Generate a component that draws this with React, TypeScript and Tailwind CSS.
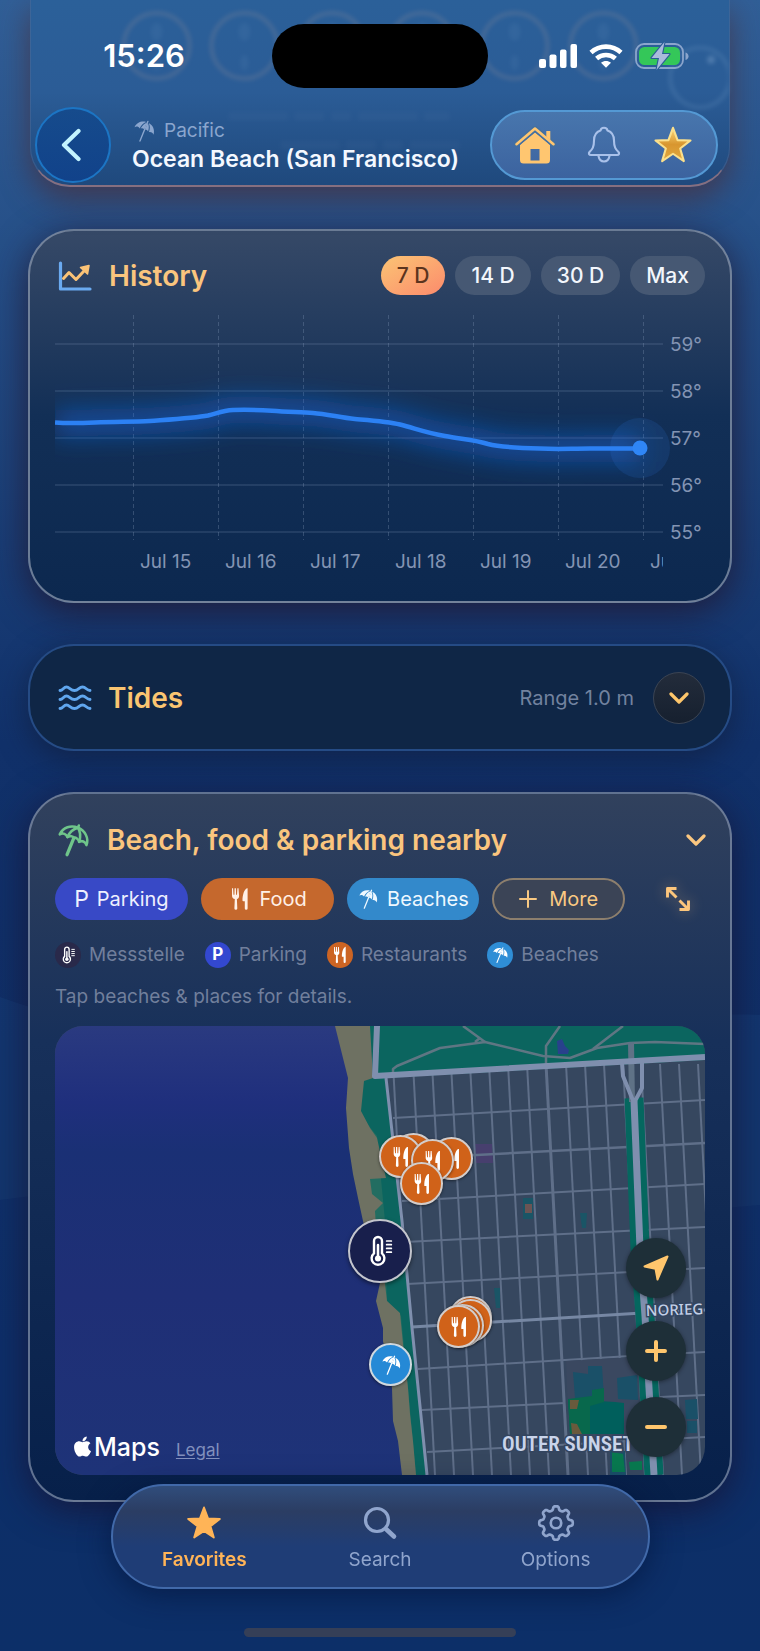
import type { ReactNode } from "react";
import { FaApple } from "react-icons/fa";

type IconProps = { className?: string };

const starPath =
  "M12 2.2 14.6 9.2 22 9.4 16.1 14 18.2 21.2 12 17 5.8 21.2 7.9 14 2 9.4 9.4 9.2Z";

const gearPath = (() => {
  const points: string[] = [];
  for (let i = 0; i < 160; i++) {
    const a = (i / 160) * Math.PI * 2;
    const wave = Math.tanh(2.2 * Math.cos(a * 8));
    const r = 9.4 + 1.2 * wave;
    points.push(`${(12 + r * Math.sin(a)).toFixed(2)} ${(12 - r * Math.cos(a)).toFixed(2)}`);
  }
  return `M${points.join("L")}Z`;
})();

function Umbrella({ className }: IconProps) {
  return (
    <svg viewBox="0 0 24 24" className={className} fill="currentColor" aria-hidden="true">
      <g transform="rotate(22 12 12)">
        <path d="M1.8 12C2 7 6 3.2 10.6 2.9 8.2 5 7.2 7.8 7 11.2 5.4 10 3.2 10.2 1.8 12Z" />
        <path d="M22.2 12C22 7 18 3.2 13.4 2.9 15.8 5 16.8 7.8 17 11.2 18.6 10 20.8 10.2 22.2 12Z" />
        <path d="M8 11C8.3 7.4 9.4 4.8 11.5 3.2V10.2C10.2 9.8 9 10 8 11Z" />
        <path d="M16 11C15.7 7.4 14.6 4.8 12.5 3.2V10.2C13.8 9.8 15 10 16 11Z" />
        <rect x="11.3" y="1" width="1.4" height="22.5" rx=".7" />
      </g>
    </svg>
  );
}

function UmbrellaOutline({ className }: IconProps) {
  return (
    <svg
      viewBox="0 0 24 24"
      className={className}
      fill="none"
      stroke="currentColor"
      strokeWidth="1.7"
      strokeLinecap="round"
      strokeLinejoin="round"
      aria-hidden="true"
    >
      <g transform="rotate(22 12 12)">
        <path d="M2.4 11.8C2.6 6.6 7 3.2 12 3.2S21.4 6.6 21.6 11.8C20 9.9 17.6 9.9 16.2 11.6 15 9.9 13 9.6 12 10.4 11 9.6 9 9.9 7.8 11.6 6.4 9.9 4 9.9 2.4 11.8Z" />
        <path d="M7.8 11.4C8 7.6 9.8 4.8 12 3.2 14.2 4.8 16 7.6 16.2 11.4M12 1.6V3" />
        <path d="M12 10.6V22.6" strokeWidth="2.2" />
      </g>
    </svg>
  );
}

function ForkKnife({ className }: IconProps) {
  return (
    <svg viewBox="0 0 24 24" className={className} fill="currentColor" aria-hidden="true">
      <path d="M4 1.2h1.1l.4 6.6h.9l.2-6.6h1.3l.2 6.6h.9l.4-6.6h1.1l.6 7.5c0 1.8-.8 2.9-2.2 3.4l.4 9.3a1.4 1.4 0 0 1-2.9 0l.4-9.3C5.200 11.600 4 10.500 4 8.700Z" />
      <path d="M19.600 1.200V21.400a1.400 1.400 0 0 1-2.800 0V14.300h-1.500c-.6 0-.8-.3-.8-.8 0-5.400 1.600-11 4.400-12.300.4-.1.700-.1.700 0Z" />
    </svg>
  );
}

function Thermometer({ className }: IconProps) {
  return (
    <svg
      viewBox="0 0 24 24"
      className={className}
      fill="none"
      stroke="currentColor"
      strokeLinecap="round"
      aria-hidden="true"
    >
      <path d="M7.500 13.800V4.500a3 3 0 0 1 6 0v9.300a4.800 4.800 0 1 1-6 0Z" strokeWidth="1.800" />
      <path d="M10.500 7.500V17" strokeWidth="1.900" />
      <circle cx="10.500" cy="17.600" r="2.300" fill="currentColor" stroke="none" />
      <path d="M17 4.500h3.500M17 7.300h3.500M17 10.100h3.500M17 12.900h3.500" strokeWidth="1.300" />
    </svg>
  );
}

function Chevron({ className }: IconProps) {
  return (
    <svg viewBox="0 0 20 12" className={className} fill="none" stroke="currentColor" strokeWidth="3.200" strokeLinecap="round" strokeLinejoin="round" aria-hidden="true">
      <path d="M2 2 10 10 18 2" />
    </svg>
  );
}

function Star({ className }: IconProps) {
  return (
    <svg viewBox="0 0 24 24" className={className} fill="currentColor" stroke="currentColor" strokeWidth="1.200" strokeLinejoin="round" aria-hidden="true">
      <path d={starPath} />
    </svg>
  );
}

function StatusBar() {
  return (
    <div className="grid h-[64px] grid-cols-[1fr_216px_1fr] items-center">
      <time className="pl-4 text-center text-[31px] leading-9 font-semibold text-white">15:26</time>
      <div className="h-full rounded-full bg-black" />
      <div className="flex items-center gap-3 pl-[51px]">
        <svg viewBox="0 0 38 24" className="h-6 w-[38px]" fill="#fff" aria-label="Signal">
          <rect x="0" y="15" width="7" height="9" rx="2" />
          <rect x="10.500" y="10.500" width="7" height="13.500" rx="2" />
          <rect x="21" y="5.500" width="6.500" height="18.500" rx="2" />
          <rect x="31.500" y="0" width="6.500" height="24" rx="2" />
        </svg>
        <svg viewBox="0 0 34 24" className="h-6 w-[34px]" fill="none" stroke="#fff" strokeWidth="4.600" aria-label="Wi-Fi">
          <path d="M2 8.500C10.500 .6 23.500 .6 32 8.500" />
          <path d="M7.600 14.500C13 9.800 21 9.800 26.400 14.500" />
          <path d="M17 23.800 12 18.800C15 16.400 19 16.400 22 18.800Z" fill="#fff" stroke="none" />
        </svg>
        <svg viewBox="0 0 54 28" className="h-7 w-[54px]" aria-label="Charging">
          <rect x="1" y="2" width="47" height="24" rx="8" fill="none" stroke="#8ba5cc" strokeWidth="1.800" />
          <rect x="4" y="5" width="41" height="18" rx="5.500" fill="#34c759" />
          <path d="M50.500 10.500c4 1 4 6.500 0 7.500Z" fill="#8ba5cc" />
          <path d="M29.500 0 16.500 16H24L21.500 28 34.500 12H27Z" fill="#a9bbdc" stroke="#2a5c97" strokeWidth="2.200" strokeLinejoin="round" paintOrder="stroke" />
        </svg>
      </div>
    </div>
  );
}

function HeaderGhosts() {
  return (
    <svg
      viewBox="0 0 700 186"
      preserveAspectRatio="none"
      className="pointer-events-none absolute inset-0 h-full w-full opacity-35 blur-[2px]"
      fill="none"
      stroke="#7b8298"
      strokeWidth="4"
      aria-hidden="true"
    >
      {[126, 214, 302, 392, 485, 574].map((x) => (
        <g key={x}>
          <circle cx={x} cy="46" r="33" />
          <ellipse cx={x} cy="32" rx="6" ry="9" fill="#5a86b5" stroke="none" opacity=".5" />
          <ellipse cx={x} cy="63" rx="4" ry="8" fill="#5a86b5" stroke="none" opacity=".5" />
        </g>
      ))}
      <circle cx="671" cy="78" r="30" stroke="#5a86b5" />
      <circle cx="682" cy="60" r="4" fill="#8fb0d4" stroke="none" />
      <path d="M198 117H420M250 146H430" stroke="#5578a5" strokeWidth="9" strokeDasharray="60 6 30 7 20 7" opacity=".3" />
    </svg>
  );
}

function Header() {
  return (
    <header className="relative mx-[30px] h-[187px] rounded-b-[40px] border-x border-b-2 border-x-[#5b6f95]/40 border-b-[#866f80] bg-gradient-to-b from-[#2b6099] via-[#2b5c96] to-[#1f497d] pt-6 shadow-[0_12px_30px_rgba(72,48,62,0.75)]">
      <HeaderGhosts />
      <div className="relative -mx-[31px]">
        <StatusBar />
        <div className="mt-[19px] flex items-center pr-[42px] pl-[35px]">
          <button
            type="button"
            aria-label="Back"
            className="flex size-[76px] shrink-0 items-center justify-center rounded-full border-2 border-[#1c75c4] bg-gradient-to-b from-[#164b8c] to-[#11428a] text-[#c3f4ff]"
          >
            <svg viewBox="0 0 20 34" className="mr-1 h-[34px] w-5" fill="none" stroke="currentColor" strokeWidth="4.200" strokeLinecap="round" strokeLinejoin="round" aria-hidden="true">
              <path d="M17.500 3 3 17 17.500 31" />
            </svg>
          </button>
          <div className="min-w-0 flex-1 pl-[21px]">
            <p className="flex items-center gap-2 text-[19px] leading-7 text-[#8ba6ce]">
              <Umbrella className="size-6" />
              Pacific
            </p>
            <h1 className="text-[23px] leading-7 font-semibold whitespace-nowrap text-[#f4f8ff]">
              Ocean Beach (San Francisco)
            </h1>
          </div>
          <div className="flex h-[70px] w-[228px] shrink-0 items-center justify-between rounded-full border-2 border-[#5499d4] bg-gradient-to-b from-[#4876ad] to-[#3c639f] px-[22px]">
            <button type="button" aria-label="Home">
              <svg viewBox="0 0 42 38" className="h-[38px] w-[42px]" fill="#ffc670" aria-hidden="true">
                <path d="M21 6.500 36 19V34a3.500 3.500 0 0 1-3.500 3.500h-23A3.500 3.500 0 0 1 6 34V19ZM16.500 23v11.500h9V23Z" fillRule="evenodd" />
                <path d="M2.500 18.200 21 2.500 39.500 18.200" fill="none" stroke="#44709f" strokeWidth="5.500" strokeLinecap="round" strokeLinejoin="round" />
                <path d="M32.300 5h4v9.500l-4-3.400Z" />
                <path d="M2.500 18.200 21 2.500 39.500 18.200" fill="none" stroke="#ffc670" strokeWidth="2.600" strokeLinecap="round" strokeLinejoin="round" />
              </svg>
            </button>
            <button type="button" aria-label="Notifications">
              <svg viewBox="0 0 34 38" className="h-[38px] w-[34px]" fill="none" stroke="#a9c1ea" strokeWidth="2.100" strokeLinecap="round" strokeLinejoin="round" aria-hidden="true">
                <path d="M13.500 4.500C14 .8 20 .8 20.500 4.500 25 6 27 9.500 27 14.500 27 21 28.500 23 31.500 26c1.200 1.500.6 3-1.500 3H4c-2.100 0-2.700-1.500-1.500-3C5.500 23 7 21 7 14.500 7 9.500 9 6 13.500 4.500Z" />
                <path d="M11.500 30c.7 3.800 3 5.500 5.500 5.500s4.800-1.700 5.500-5.500" />
              </svg>
            </button>
            <button type="button" aria-label="Favorite">
              <svg viewBox="0 0 24 24" className="size-[42px]" aria-hidden="true">
                <defs>
                  <linearGradient id="gold" x1="0" y1="0" x2="0" y2="1">
                    <stop offset="0" stopColor="#fbd778" />
                    <stop offset=".5" stopColor="#d8962f" />
                    <stop offset="1" stopColor="#e2a93f" />
                  </linearGradient>
                </defs>
                <path d={starPath} fill="url(#gold)" stroke="#fbe08c" strokeWidth="1.200" strokeLinejoin="round" />
              </svg>
            </button>
          </div>
        </div>
      </div>
    </header>
  );
}

const days = ["Jul 15", "Jul 16", "Jul 17", "Jul 18", "Jul 19", "Jul 20", "Jul 21"];
const degrees = [59, 58, 57, 56, 55];
const curve =
  "M0 107.500C12 108.500 25 108.200 40 107.500 60 106.500 78 107 95 106 115 104.500 140 103 153 100.500 163 98 168 95.500 178 95 195 94.500 205 95 217 95.700 232 97 245 97 258 98 272 99 285 102.500 300 104 318 105.500 333 106.500 345 109.500 362 114 372 118 390 121 405 124 420 125 433 129 445 132 465 133 485 133.500 505 134.500 515 133.500 535 133.500H585";

function HistoryChart() {
  return (
    <svg viewBox="0 0 650 260" className="mt-5 w-full overflow-visible" role="img" aria-label="Water temperature, last 7 days">
      <defs>
        <filter id="glow" filterUnits="userSpaceOnUse" x="0" y="40" width="610" height="160">
          <feGaussianBlur stdDeviation="12" />
        </filter>
        <clipPath id="plot">
          <rect x="0" y="0" width="608" height="260" />
        </clipPath>
      </defs>
      {degrees.map((d, i) => (
        <g key={d}>
          <path d={`M0 ${29 + i * 47}H608`} stroke="#8397b8" strokeOpacity=".24" strokeWidth="1.500" />
          <text x="615" y={36 + i * 47} className="fill-[#8394b3] font-[Inter,sans-serif] text-[19px]">{`${d}°`}</text>
        </g>
      ))}
      <g clipPath="url(#plot)">
        {days.map((d, i) => (
          <g key={d}>
            <path d={`M${78.5 + i * 85} 0V225`} stroke="#8397b8" strokeOpacity=".32" strokeWidth="1" strokeDasharray="4 3" />
            <text x={85 + i * 85} y="253" className="fill-[#8394b3] font-[Inter,sans-serif] text-[19px]">
              {d}
            </text>
          </g>
        ))}
        <path d={curve} fill="none" stroke="#1c6ae0" strokeOpacity=".5" strokeWidth="26" filter="url(#glow)" />
        <path d={curve} fill="none" stroke="#2c81f4" strokeWidth="4.500" />
      </g>
      <circle cx="585" cy="133" r="30" fill="#2f7fe8" fillOpacity=".14" />
      <circle cx="585" cy="133" r="7.500" fill="#2f86f6" />
    </svg>
  );
}

function HistoryCard() {
  const ranges = ["7 D", "14 D", "30 D", "Max"];
  return (
    <section className="mt-[42px] h-[374px] rounded-[46px] border-2 border-[#8391a8]/80 bg-gradient-to-b from-[#364967] via-[#122f56] via-50% to-[#0c284f] px-[25px] pt-[25px] shadow-[0_8px_36px_rgba(34,20,42,0.8)]">
      <div className="flex items-center">
        <svg viewBox="0 0 34 30" className="ml-[3px] h-[30px] w-[34px]" fill="none" strokeLinecap="round" strokeLinejoin="round" aria-hidden="true">
          <path d="M2.500 2V28H32" stroke="#6aaaf0" strokeWidth="3.200" />
          <path d="M5.500 17.500 11 11.500 18 18.500 26 10" stroke="#fbc377" strokeWidth="3" />
          <path d="M22.500 6.500 31 4.500 29.500 13Z" fill="#fbc377" stroke="#fbc377" strokeWidth="1.500" />
        </svg>
        <h2 className="ml-[17px] text-[28px] leading-9 font-semibold text-[#fac57e]">History</h2>
        <div className="ml-auto flex gap-[10px]">
          {ranges.map((r, i) => (
            <button
              key={r}
              type="button"
              aria-pressed={i === 0}
              className={
                i === 0
                  ? "h-[39px] rounded-full bg-gradient-to-br from-[#fac474] to-[#fb8a6c] px-4 text-[21px] font-medium text-[#5b341e]"
                  : "h-[39px] rounded-full bg-[#465873] px-4 text-[21px] font-medium text-[#f2f6fc]"
              }
            >
              {r}
            </button>
          ))}
        </div>
      </div>
      <HistoryChart />
    </section>
  );
}

function TidesCard() {
  return (
    <section className="mt-[41px] flex h-[107px] items-center rounded-[46px] border-2 border-[#2b5595]/80 bg-[#0f2646] px-[25px] shadow-[0_8px_30px_rgba(16,26,54,0.6)]">
      <svg viewBox="0 0 34 26" className="ml-[3px] h-[26px] w-[34px]" fill="none" stroke="#60a6ee" strokeWidth="2.900" strokeLinecap="round" aria-hidden="true">
        <path d="M2 5.500C5 5.500 5.500 2 8.500 2S12.500 5.500 16.500 5.500 21 2 24.500 2 28.500 5.500 32 5.500" />
        <path d="M2 14.500C5 14.500 5.500 11 8.500 11S12.500 14.500 16.500 14.500 21 11 24.500 11 28.500 14.500 32 14.500" />
        <path d="M2 23.500C5 23.500 5.500 20 8.500 20S12.500 23.500 16.500 23.500 21 20 24.500 20 28.500 23.500 32 23.500" />
      </svg>
      <h2 className="ml-4 text-[28px] leading-9 font-semibold text-[#fac571]">Tides</h2>
      <p className="ml-auto text-xl text-[#72829f]">Range 1.0 m</p>
      <button type="button" aria-label="Expand tides" className="ml-[19px] flex size-[52px] items-center justify-center rounded-full border border-[#3b4453] bg-gradient-to-b from-[#232c3b] to-[#16202f] text-[#fdc66b]">
        <Chevron className="h-3 w-5" />
      </button>
    </section>
  );
}

function Chip({ className, icon, label }: { className: string; icon: ReactNode; label: string }) {
  return (
    <button type="button" className={`flex h-[42px] items-center justify-center gap-2 rounded-full text-xl ${className}`}>
      {icon}
      {label}
    </button>
  );
}

function LegendItem({ className, icon, label }: { className: string; icon: ReactNode; label: string }) {
  return (
    <li className="flex items-center gap-2">
      <span className={`flex size-[26px] items-center justify-center rounded-full text-white ${className}`}>{icon}</span>
      {label}
    </li>
  );
}

const streetTops = [338, 358, 377, 396, 415, 434, 453, 472, 491, 511, 530, 549, 568, 586, 605, 624, 643];
const crossStreets = [
  "M338 92 650 74",
  "M347 175 650 158",
  "M350 216 650 201",
  "M352 258 650 242",
  "M363 343 575 330 650 326",
  "M367 384 510 377M605 371 650 369",
  "M372 426 650 411",
];

function MapDrawing() {
  return (
    <svg viewBox="0 0 650 449" preserveAspectRatio="xMidYMid slice" className="absolute inset-0 h-full w-full" role="img" aria-label="Map of Ocean Beach">
      <defs>
        <linearGradient id="sea" x1="0" y1="0" x2="0" y2="1">
          <stop offset="0" stopColor="#2a3a80" />
          <stop offset=".17" stopColor="#1f2f7d" />
          <stop offset=".28" stopColor="#1a3075" />
          <stop offset=".6" stopColor="#1f2f76" />
          <stop offset="1" stopColor="#1e3378" />
        </linearGradient>
        <clipPath id="land">
          <path d="M331 52 650 33V449H372L357 302 347 195Z" />
        </clipPath>
      </defs>
      <rect width="650" height="449" fill="#36475f" />
      <path d="M300 0H650V34L330 52 347 195 357 302 372 449H300Z" fill="#0b655f" />
      <path d="M361 449 353 362 346 290 332 275 330 195 322 110 306 90V55L316 52 315 0H270V449Z" fill="#226d61" />
      <path d="M270 0H315L318 52 309 55 306 85 315 102 322 112 326 130 331 152 315 153 317 168 328 177 320 185 321 200 330 258 332 275 345 287 348 318 353 362 355 388 358 415 361 449H270Z" fill="#6e7162" />
      <path d="M0 0H280L287 28 293 52 291 82 294 122 298 148 303 172 308 195 316 225 325 257 321 275 328 302V315L333 340 337 362 338 395 343 415 347 449H0Z" fill="url(#sea)" />
      <path d="M502 15 507 13 510 20 514 24 513 28 503 28Z" fill="#28418c" />
      <g clipPath="url(#land)">
        <path d="M420 118H437L438 137H421Z" fill="#473f6e" />
        <path d="M468 172H478V193H468ZM525 187H532L531 202H527ZM439 262H445V282H441Z" fill="#1a5566" />
        <path d="M470 178H477V187H470Z" fill="#6b5454" />
        <g stroke="#5f6f89" strokeWidth="2" fill="none">
          {streetTops.map((x) => (
            <path key={x} d={`M${x} 38 ${x + 22} 449`} strokeWidth={x === 491 ? 3 : 2} />
          ))}
          {crossStreets.map((d) => (
            <path key={d} d={d} />
          ))}
          <path d="M345 133 650 117" strokeWidth="2.500" />
          <path d="M357 301 587 287 650 284" stroke="#7687a3" strokeWidth="3" />
        </g>
        <path d="M511 335 582 331 585 410 514 416Z" fill="#3a4860" />
        <path d="M518 346 533 348V340H547L549 372H520ZM562 352 582 349 583 374 563 373ZM630 374 642 373 643 393H631ZM632 395H642V407H632Z" fill="#1a5068" />
        <path d="M513 373 560 376 569 377V408H515Z" fill="#005f5c" />
        <path d="M513 373 537 370V364L549 362V376L535 380V408H515Z" fill="#08684c" />
        <path d="M515 374H524L522 383H515ZM516 397 522 398 527 408H517Z" fill="#695a3c" />
        <path d="M555 424 570 425 571 449H555Z" fill="#1a5068" />
        <path d="M557 426 568 428 570 446H557ZM574 436 587 435V444H575Z" fill="#08784f" />
      </g>
      <g fill="none" stroke="#5f7683" strokeWidth="2.500" strokeLinejoin="round">
        <path d="M338 48V43L342 40 385 22 430 16 488 30 515 32 542 22 575 17 600 16 650 18" />
        <path d="M408 0 430 16M420 16 425 12M505 0 491 20V38M568 0 538 23" />
      </g>
      <path d="M579 72 585 222 590 290 594 362 599 449" fill="none" stroke="#05675f" strokeWidth="19" />
      <path d="M576 16 577 76" stroke="#5f7286" strokeWidth="6" />
      <g fill="none" stroke="#7f8fae" strokeLinejoin="round">
        <path d="M322 0 320 50 650 31" strokeWidth="6" />
        <path d="M331 52 347 195 357 302 372 449" strokeWidth="3" />
        <path d="M567 37 568 50 579 77 587 62V36" strokeWidth="4" />
        <path d="M579 75 585 222 590 290 594 362 599 449" strokeWidth="7" />
      </g>
      <text x="591" y="290" className="fill-[#c2cfe6] stroke-[#33455f] stroke-[3px] font-['Noto_Sans',sans-serif] text-[15px] font-medium" paintOrder="stroke" transform="rotate(-2 591 290)">
        NORIEG
      </text>
      <text x="447" y="425" className="fill-[#c9d4ea] stroke-[#33455f] stroke-[3px] font-['Roboto_Condensed','Liberation_Sans_Narrow',Roboto,sans-serif] text-[21px] font-semibold" paintOrder="stroke">
        OUTER SUNSET
      </text>
    </svg>
  );
}

function FoodPin({ className }: { className: string }) {
  return (
    <button type="button" aria-label="Restaurant" className={`absolute flex size-[43px] items-center justify-center rounded-full border-2 border-[#d3cdcb] bg-[#d06219] text-white shadow-[0_1px_3px_rgba(0,0,0,0.5)] ${className}`}>
      <ForkKnife className="size-[22px]" />
    </button>
  );
}

function NearbyMap() {
  const control = "flex size-[60px] items-center justify-center rounded-full bg-[#1e2f38] text-[#ffc66d] shadow-[0_1px_4px_rgba(0,0,0,0.4)]";
  return (
    <div className="relative mt-[15px] h-[449px] overflow-hidden rounded-[28px]">
      <MapDrawing />
      <FoodPin className="top-[107px] left-[337px]" />
      <FoodPin className="top-[111px] left-[375px]" />
      <FoodPin className="top-[109px] left-[324px]" />
      <FoodPin className="top-[113px] left-[356px]" />
      <FoodPin className="top-[136px] left-[345px]" />
      <FoodPin className="top-[270px] left-[394px]" />
      <FoodPin className="top-[273px] left-[394px]" />
      <FoodPin className="top-[278px] left-[386px]" />
      <FoodPin className="top-[279px] left-[382px]" />
      <button type="button" aria-label="Measuring station" className="absolute top-[193px] left-[293px] flex size-[64px] items-center justify-center rounded-full border-2 border-[#c3c5cd] bg-[#181f4c] text-white shadow-[0_2px_4px_rgba(0,0,0,0.5)]">
        <Thermometer className="size-8" />
      </button>
      <button type="button" aria-label="Beach" className="absolute top-[317px] left-[314px] flex size-[43px] items-center justify-center rounded-full border-2 border-[#cfd8df] bg-[#2589d6] text-white shadow-[0_1px_3px_rgba(0,0,0,0.5)]">
        <Umbrella className="size-[22px]" />
      </button>
      <div className="absolute right-[19px] bottom-[18px] flex flex-col">
        <button type="button" aria-label="Locate me" className={`${control} mb-[23px]`}>
          <svg viewBox="0 0 28 28" className="size-7" fill="currentColor" stroke="currentColor" strokeWidth="2" strokeLinejoin="round" aria-hidden="true">
            <path d="M25.500 2.500 15.500 25.500 13.500 14.800 2.500 12.500Z" />
          </svg>
        </button>
        <button type="button" aria-label="Zoom in" className={`${control} mb-4`}>
          <svg viewBox="0 0 24 24" className="size-6" stroke="currentColor" strokeWidth="4" strokeLinecap="round" aria-hidden="true">
            <path d="M12 3V21M3 12H21" />
          </svg>
        </button>
        <button type="button" aria-label="Zoom out" className={control}>
          <svg viewBox="0 0 24 24" className="size-6" stroke="currentColor" strokeWidth="4" strokeLinecap="round" aria-hidden="true">
            <path d="M3 12H21" />
          </svg>
        </button>
      </div>
      <div className="absolute bottom-3 left-[16px] flex items-baseline text-white">
        <FaApple className="size-[23px] self-center" aria-hidden="true" />
        <span className="text-[25px] leading-8 font-medium">Maps</span>
        <a href="#legal" className="ml-4 text-[17px] text-[#8290bd] underline underline-offset-2">
          Legal
        </a>
      </div>
    </div>
  );
}

function NearbyCard() {
  return (
    <section className="mt-[41px] rounded-[46px] border-2 border-[#7f8da8]/75 bg-gradient-to-b from-[#31415d] via-[#17305a] via-35% to-[#07204a] px-[25px] pt-[27px] pb-[25px] shadow-[0_8px_36px_rgba(24,18,48,0.75)]">
      <div className="flex h-[37px] items-center">
        <UmbrellaOutline className="size-[36px] text-[#6fc58a]" />
        <h2 className="ml-4 text-[28px] leading-9 font-semibold text-[#fac57e]">Beach, food &amp; parking nearby</h2>
        <button type="button" aria-label="Collapse" className="ml-auto text-[#fbc780]">
          <Chevron className="-mr-px h-3 w-5" />
        </button>
      </div>
      <div className="mt-5 flex items-center">
        <div className="grid w-[570px] grid-cols-4 gap-[13px]">
          <Chip className="bg-[#3849c6] text-[#eef0ff]" icon={<span className="text-[23px]">P</span>} label="Parking" />
          <Chip className="bg-[#c5682d] text-[#fff0e6]" icon={<ForkKnife className="size-6" />} label="Food" />
          <Chip className="bg-[#3389cb] text-[#eef8ff]" icon={<Umbrella className="size-[22px]" />} label="Beaches" />
          <Chip
            className="border-2 border-[#8d7f6d] bg-[#3b4456] text-[#f9c982]"
            icon={
              <svg viewBox="0 0 18 18" className="mr-1 size-[18px]" stroke="currentColor" strokeWidth="2" strokeLinecap="round" aria-hidden="true">
                <path d="M9 1V17M1 9H17" />
              </svg>
            }
            label="More"
          />
        </div>
        <button type="button" aria-label="Full screen" className="mr-[14px] ml-auto text-[#fcc67c] drop-shadow-[0_0_7px_rgba(252,198,124,0.4)]">
          <svg viewBox="0 0 26 26" className="size-[26px]" fill="none" stroke="currentColor" strokeWidth="2.900" strokeLinejoin="round" aria-hidden="true">
            <path d="M2.500 11.500V2.500H11.500M3 3 11.500 11.500M23.500 14.500V23.500H14.500M23 23 14.500 14.500" />
          </svg>
        </button>
      </div>
      <ul className="mt-5 flex h-[30px] items-center gap-[20px] text-[19px] text-[#717f9c]">
        <LegendItem className="bg-[#29294a]" icon={<Thermometer className="size-[18px]" />} label="Messstelle" />
        <LegendItem className="bg-[#3348d0]" icon={<span className="text-[17px] font-bold">P</span>} label="Parking" />
        <LegendItem className="bg-[#cc6423]" icon={<ForkKnife className="size-[18px]" />} label="Restaurants" />
        <LegendItem className="bg-[#2f8ed6]" icon={<Umbrella className="size-[18px]" />} label="Beaches" />
      </ul>
      <p className="mt-[13px] text-[19px] leading-7 text-[#717f9c]">Tap beaches &amp; places for details.</p>
      <NearbyMap />
    </section>
  );
}

function TabBar() {
  return (
    <div className="fixed inset-x-0 bottom-0 flex flex-col items-center">
      <nav className="grid h-[105px] w-[539px] max-w-full grid-cols-3 rounded-full border-2 border-[#4169a9] bg-gradient-to-b from-[#304d7c] via-[#2b3d63] via-25% to-[#1f3d76] to-60% px-1 shadow-[0_6px_30px_rgba(4,18,55,0.6)]">
        <a href="#favorites" className="flex flex-col items-center pt-[18px] text-[#ffb457]" aria-current="page">
          <Star className="size-[38px]" />
          <span className="text-[19px] leading-9 font-semibold">Favorites</span>
        </a>
        <a href="#search" className="flex flex-col items-center pt-[18px] text-[#90a5cd]">
          <svg viewBox="0 0 38 38" className="size-[38px]" fill="none" stroke="currentColor" strokeLinecap="round" aria-hidden="true">
            <circle cx="16" cy="16" r="11.500" strokeWidth="3.200" />
            <path d="M25.500 25.500 33 32.500" strokeWidth="4.600" />
          </svg>
          <span className="text-[19px] leading-9">Search</span>
        </a>
        <a href="#options" className="flex flex-col items-center pt-[18px] text-[#90a5cd]">
          <svg viewBox="0 0 24 24" className="size-[38px]" fill="none" stroke="currentColor" strokeWidth="1.700" strokeLinejoin="round" aria-hidden="true">
            <path d={gearPath} />
            <circle cx="12" cy="12" r="3.300" />
          </svg>
          <span className="text-[19px] leading-9">Options</span>
        </a>
      </nav>
      <div className="mt-[39px] mb-[14px] h-[9px] w-[272px] rounded-full bg-[#353f57]" />
    </div>
  );
}

export default function App() {
  return (
    <div className="relative min-h-screen overflow-hidden bg-gradient-to-b from-[#315f97] via-[#11316a] via-45% to-[#0b2b61] pb-[149px] font-[Inter,sans-serif]">
      <svg viewBox="0 0 760 1651" preserveAspectRatio="none" className="absolute inset-0 h-full w-full" aria-hidden="true">
        <path d="M0 997C60 1018 120 1035 200 1040 420 1055 600 1010 760 1015V1651H0Z" fill="#1d4a86" fillOpacity=".28" />
        <path d="M0 1200C200 1170 500 1230 760 1205V1651H0Z" fill="#0a2a66" fillOpacity=".5" />
      </svg>
      <div className="relative">
        <Header />
        <main className="mx-[28px]">
          <HistoryCard />
          <TidesCard />
          <NearbyCard />
        </main>
      </div>
      <TabBar />
    </div>
  );
}
